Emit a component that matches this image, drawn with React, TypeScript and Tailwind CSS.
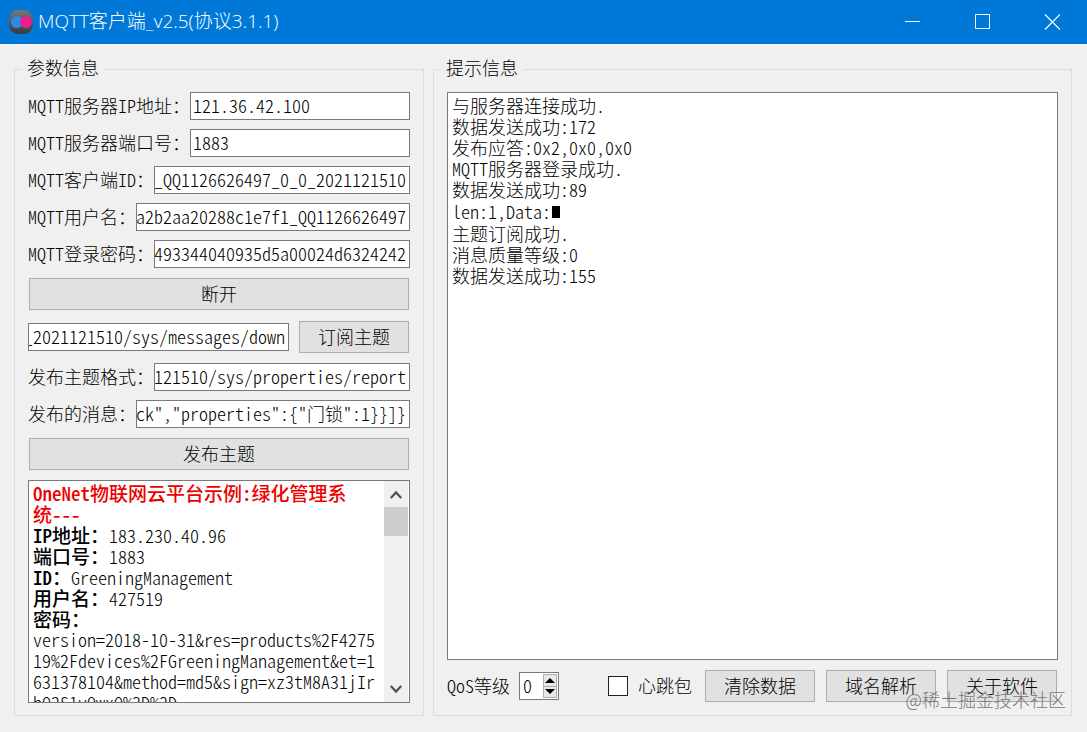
import React, { useLayoutEffect, useRef, useState } from 'react';

interface TextBoxProps {
  id: string;
  initial: string;
  label?: string;
}

// Long values are scrolled to their end, where the caret would be
const TextBox: React.FC<TextBoxProps> = ({ id, initial, label }) => {
  const [value, setValue] = useState(initial);
  const ref = useRef<HTMLInputElement>(null);
  const long = initial.length > 20;

  useLayoutEffect(() => {
    if (ref.current && long) ref.current.scrollLeft = ref.current.scrollWidth;
  }, [long]);

  return (
    <input
      ref={ref}
      id={id}
      aria-label={label}
      value={value}
      onChange={e => setValue(e.target.value)}
      className={`h-7 min-w-0 flex-1 border border-[#7a7a7a] bg-white pr-[3px] pb-0.5 text-[18px] leading-6 outline-none ${long ? 'pl-0' : 'pl-0.5'}`}
    />
  );
};

const Field: React.FC<{ id: string; label: string; initial: string }> = ({ id, label, initial }) => (
  <div className="flex h-7 shrink-0 items-start">
    <label htmlFor={id} className="shrink-0 whitespace-nowrap text-[18px] leading-[26px]">{label}</label>
    <TextBox id={id} initial={initial} />
  </div>
);

const PushButton: React.FC<{ label: string; wide?: boolean }> = ({ label, wide }) => (
  <button
    type="button"
    className={`m-px h-8 shrink-0 border border-[#adadad] bg-[#e1e1e1] pb-0.5 text-[18px] leading-7 hover:border-[#0078d7] hover:bg-[#e5f1fb] ${wide ? '' : 'w-[110px]'}`}
  >
    {label}
  </button>
);

const GroupBox: React.FC<{ title: string; children: React.ReactNode }> = ({ title, children }) => (
  <fieldset className="flex min-h-0 min-w-0 flex-col border border-[#dcdcdc] px-[13px] pt-2.5 pb-3">
    <legend className="-ml-1.5 px-[5px] pb-1 text-[18px] leading-[22px]">{title}</legend>
    {children}
  </fieldset>
);

const TitleBar = () => (
  <header className="flex h-11 shrink-0 items-center bg-[#0078d7] pl-[9px] text-white">
    <svg width="24" height="24" viewBox="0 0 24 24" aria-hidden="true">
      <defs>
        <linearGradient id="badge" x1="0" y1="0" x2="0" y2="1">
          <stop offset="0" stopColor="#777" />
          <stop offset=".5" stopColor="#55585e" />
          <stop offset="1" stopColor="#383b40" />
        </linearGradient>
      </defs>
      <rect width="24" height="24" rx="9" fill="url(#badge)" />
      <circle cx="8" cy="12" r="6" fill="#2b8ce6" />
      <circle cx="17" cy="12" r="6" fill="#ea1f92" />
    </svg>
    <h1 className="ml-[5px] flex-1 pb-0.5 font-['Open_Sans','Noto_Sans_CJK_SC',sans-serif] text-[19px] font-light [font-feature-settings:normal]">
      MQTT客户端_v2.5(协议3.1.1)
    </h1>
    <div className="flex h-full">
      <button type="button" aria-label="最小化" className="flex w-[70px] items-center justify-center hover:bg-white/10">
        <svg width="16" height="16" viewBox="0 0 16 16" stroke="currentColor"><path d="M1 7.5h15" /></svg>
      </button>
      <button type="button" aria-label="最大化" className="flex w-[70px] items-center justify-center hover:bg-white/10">
        <svg width="16" height="16" viewBox="0 0 16 16" fill="none" stroke="currentColor"><path d="M1.5 .5h14v14h-14z" /></svg>
      </button>
      <button type="button" aria-label="关闭" className="flex w-[70px] items-center justify-center hover:bg-red-600">
        <svg width="16" height="16" viewBox="0 0 16 16" stroke="currentColor" strokeWidth="1.2"><path d="M1 .5l15 15M16 .5l-15 15" /></svg>
      </button>
    </div>
  </header>
);

const exampleRows = [
  { label: 'IP地址：', value: '183.230.40.96' },
  { label: '端口号：', value: '1883' },
  { label: 'ID：', value: 'GreeningManagement' },
  { label: '用户名：', value: '427519' },
  { label: '密码：', value: '' },
];

const exampleToken =
  'version=2018-10-31&res=products%2F427519%2Fdevices%2FGreeningManagement&et=1631378104&method=md5&sign=xz3tM8A31jIrhQ2S1vQwxQ%3D%3D';

const ExamplePanel = () => (
  <div className="flex min-h-0 flex-1 border border-[#7a7a7a] bg-white pr-px">
    <div className="min-w-0 flex-1 overflow-hidden pt-px pr-[3px] pl-1 text-[18px] leading-[21px]">
      <p className="text-[19px] font-medium text-[#ee0000]">
        OneNet物联网云平台示例:绿化管理系<br />统---
      </p>
      {exampleRows.map(row => (
        <p key={row.label} className="h-[21px] whitespace-nowrap">
          <b className="text-[19px] font-medium">{row.label}</b>
          {row.value}
        </p>
      ))}
      <p className="break-all">{exampleToken}</p>
    </div>
    <div className="flex w-6 shrink-0 flex-col bg-[#f0f0f0] text-[#505050]">
      <button type="button" aria-label="向上滚动" className="flex h-[26px] items-center justify-center">
        <svg width="12" height="9" viewBox="0 0 12 9" fill="none" stroke="currentColor" strokeWidth="2.2"><path d="M.8 8L6 2.4 11.2 8" /></svg>
      </button>
      <div className="h-[29px] bg-[#cdcdcd]" />
      <button type="button" aria-label="向下滚动" className="mt-auto flex h-[26px] items-center justify-center">
        <svg width="12" height="9" viewBox="0 0 12 9" fill="none" stroke="currentColor" strokeWidth="2.2"><path d="M.8 1L6 6.6 11.2 1" /></svg>
      </button>
    </div>
  </div>
);

const logBefore = ['与服务器连接成功.', '数据发送成功:172', '发布应答:0x2,0x0,0x0', 'MQTT服务器登录成功.', '数据发送成功:89'];
const logAfter = ['主题订阅成功.', '消息质量等级:0', '数据发送成功:155'];

const LogPanel = () => (
  <div role="log" className="min-h-0 flex-1 overflow-hidden border border-[#7a7a7a] bg-white pt-0.5 pl-1 text-[18px] leading-[21px]">
    {logBefore.map(line => <p key={line}>{line}</p>)}
    <p className="flex h-[23px] items-center">
      len:1,Data:
      <span className="ml-px h-3 w-2 bg-black" />
    </p>
    {logAfter.map(line => <p key={line}>{line}</p>)}
  </div>
);

const QosSpinner = () => {
  const [qos, setQos] = useState(0);
  const step = (d: number) => setQos(q => Math.min(2, Math.max(0, q + d)));
  return (
    <div className="flex items-start gap-[9px]">
      <label htmlFor="qos" className="text-[18px] leading-[26px]">QoS等级</label>
      <div className="flex h-7 w-10 border border-[#7a7a7a] bg-white p-px">
        <input id="qos" value={qos} readOnly className="w-0 min-w-0 flex-1 pb-0.5 pl-0.5 text-[18px] leading-6 outline-none" />
        <div className="flex w-3.5 flex-col border border-[#adadad] bg-[#e8e8e8]">
          <button type="button" aria-label="增加" onClick={() => step(1)} className="flex flex-1 items-center justify-center border-b border-[#adadad]">
            <svg width="10" height="5" viewBox="0 0 10 5"><path d="M0 5L5 0l5 5z" /></svg>
          </button>
          <button type="button" aria-label="减少" onClick={() => step(-1)} className="flex flex-1 items-center justify-center">
            <svg width="10" height="5" viewBox="0 0 10 5"><path d="M0 0l5 5 5-5z" /></svg>
          </button>
        </div>
      </div>
    </div>
  );
};

const App: React.FC = () => {
  const [heartbeat, setHeartbeat] = useState(false);

  return (
    <div className="relative flex h-screen flex-col bg-[#f0f0f0] font-['Noto_Sans_CJK_SC',monospace] font-light text-black [font-feature-settings:'hwid']">
      <TitleBar />
      <main className="grid min-h-0 flex-1 grid-cols-[410px_minmax(0,1fr)] grid-rows-[minmax(0,1fr)] gap-[9px] pt-3 pr-[15px] pb-4 pl-3.5">
        <GroupBox title="参数信息">
          <div className="flex min-h-0 flex-1 flex-col gap-[9px]">
            <Field id="host" label="MQTT服务器IP地址：" initial="121.36.42.100" />
            <Field id="port" label="MQTT服务器端口号：" initial="1883" />
            <Field id="client" label="MQTT客户端ID：" initial="_QQ1126626497_0_0_2021121510" />
            <Field id="user" label="MQTT用户名：" initial="a2b2aa20288c1e7f1_QQ1126626497" />
            <Field id="password" label="MQTT登录密码：" initial="493344040935d5a00024d6324242" />
            <PushButton label="断开" wide />
            <div className="flex items-center gap-[9px]">
              <TextBox id="topic" label="订阅主题" initial="_2021121510/sys/messages/down" />
              <PushButton label="订阅主题" />
            </div>
            <Field id="pub-topic" label="发布主题格式：" initial="121510/sys/properties/report" />
            <Field id="pub-message" label="发布的消息：" initial={'ck","properties":{"门锁":1}}]}'} />
            <PushButton label="发布主题" wide />
            <ExamplePanel />
          </div>
        </GroupBox>

        <GroupBox title="提示信息">
          <div className="flex min-h-0 flex-1 flex-col gap-[9px]">
            <LogPanel />
            <div className="flex items-center gap-[9px]">
              <QosSpinner />
              <label className="mr-[3px] ml-auto flex items-center gap-2.5 text-[18px] leading-7">
                <input
                  type="checkbox"
                  checked={heartbeat}
                  onChange={e => setHeartbeat(e.target.checked)}
                  className="size-5 appearance-none border border-[#222222] bg-white checked:bg-[#0078d7]"
                />
                <span className="pb-0.5">心跳包</span>
              </label>
              <PushButton label="清除数据" />
              <PushButton label="域名解析" />
              <PushButton label="关于软件" />
            </div>
          </div>
        </GroupBox>
      </main>
      <span className="pointer-events-none absolute right-[21px] bottom-5 text-[18px] leading-[26px] text-[#777777] [font-feature-settings:normal]">
        @稀土掘金技术社区
      </span>
    </div>
  );
};

export default App;
